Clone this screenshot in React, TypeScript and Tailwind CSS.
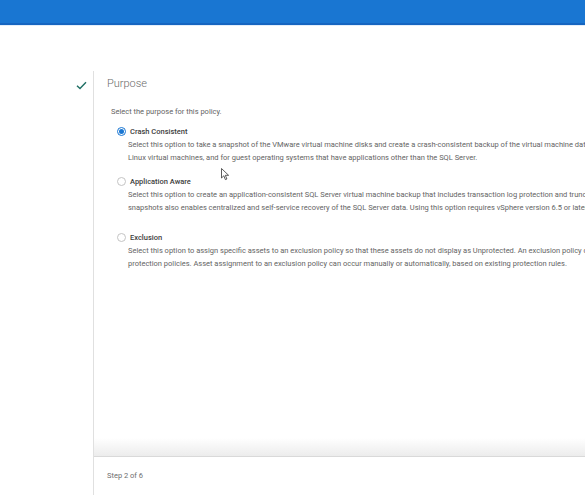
import React from "react";

const font = { fontFamily: "Roboto, 'Liberation Sans', sans-serif" };

function Radio({ checked }: { checked?: boolean }) {
  return checked ? (
    <span className="flex h-[9px] w-[9px] shrink-0 items-center justify-center rounded-full border border-[#1976d2] bg-white">
      <span className="block h-[5px] w-[5px] rounded-full bg-[#1976d2]" />
    </span>
  ) : (
    <span className="block h-[9px] w-[9px] shrink-0 rounded-full border border-[#c4c4c4] bg-white" />
  );
}

function Option({
  label,
  lines,
  checked,
  className,
}: {
  label: string;
  lines: string[];
  checked?: boolean;
  className?: string;
}) {
  return (
    <div className={"flex flex-col " + (className ?? "")}>
      <div className="flex h-[13px] items-center">
        <div className="ml-[10px] flex">
          <Radio checked={checked} />
        </div>
        <span className="ml-[4px] whitespace-nowrap text-[7.5px] font-medium text-[#404040]">{label}</span>
      </div>
      <div className="ml-[21px] flex flex-col">
        {lines.map((l, i) => (
          <div key={i} className="h-[13px] whitespace-nowrap text-[7.5px] leading-[13px] text-[#646464]">
            {l}
          </div>
        ))}
      </div>
    </div>
  );
}

export default function App() {
  return (
    <div className="relative flex h-screen w-full flex-col overflow-hidden bg-white antialiased" style={font}>
      <div className="h-[25px] shrink-0 border-b-2 border-[#1565c0] bg-[#1976d2]" />
      <div className="h-[1px] shrink-0 bg-[#e3eefa]" />
      <div className="mt-[45px] flex min-h-0 flex-1">
        <div className="flex w-[93px] shrink-0 justify-end pr-[6px] pt-[9px]">
          <svg width="11" height="9" viewBox="0 0 11 9" className="mt-[1px]">
            <path d="M1 4.8 L4 7.6 L10 1.2" fill="none" stroke="#1f6f64" strokeWidth="1.4" />
          </svg>
        </div>
        <div className="flex min-w-0 flex-1 flex-col border-l border-[#e0e0e0]">
          <div className="flex min-h-0 flex-1 flex-col overflow-hidden pl-[13px]">
            <div className="mt-[5px] h-[16px] text-[11px] font-light leading-[16px] text-[#6b6b6b]">Purpose</div>
            <div className="ml-[4px] mt-[13px] h-[13px] whitespace-nowrap text-[7.5px] leading-[13px] text-[#646464]">
              Select the purpose for this policy.
            </div>
            <Option
              className="mt-[7px]"
              checked
              label="Crash Consistent"
              lines={[
                "Select this option to take a snapshot of the VMware virtual machine disks and create a crash-consistent backup of the virtual machine data. Use this option for Windows and",
                "Linux virtual machines, and for guest operating systems that have applications other than the SQL Server.",
              ]}
            />
            <Option
              className="mt-[11px]"
              label="Application Aware"
              lines={[
                "Select this option to create an application-consistent SQL Server virtual machine backup that includes transaction log protection and truncation. Application aware",
                "snapshots also enables centralized and self-service recovery of the SQL Server data. Using this option requires vSphere version 6.5 or later.",
              ]}
            />
            <Option
              className="mt-[17px]"
              label="Exclusion"
              lines={[
                "Select this option to assign specific assets to an exclusion policy so that these assets do not display as Unprotected. An exclusion policy cannot be used with other",
                "protection policies. Asset assignment to an exclusion policy can occur manually or automatically, based on existing protection rules.",
              ]}
            />
            <div className="flex-1" />
          </div>
          <div className="h-[18px] shrink-0 bg-gradient-to-b from-white to-[#ececec]" />
          <div className="flex h-[39px] shrink-0 items-center border-t border-[#d9d9d9] pl-[13px]">
            <span className="whitespace-nowrap text-[7.5px] text-[#6e6e6e]">Step 2 of 6</span>
          </div>
        </div>
      </div>
      <svg className="absolute left-[221px] top-[168px]" width="9" height="13" viewBox="0 0 9 13">
        <path d="M0.5 0.5 L0.5 10 L2.8 7.8 L4.4 11.6 L5.9 11 L4.3 7.3 L7.6 7.3 Z" fill="white" stroke="#333" strokeWidth="0.8" />
      </svg>
    </div>
  );
}
